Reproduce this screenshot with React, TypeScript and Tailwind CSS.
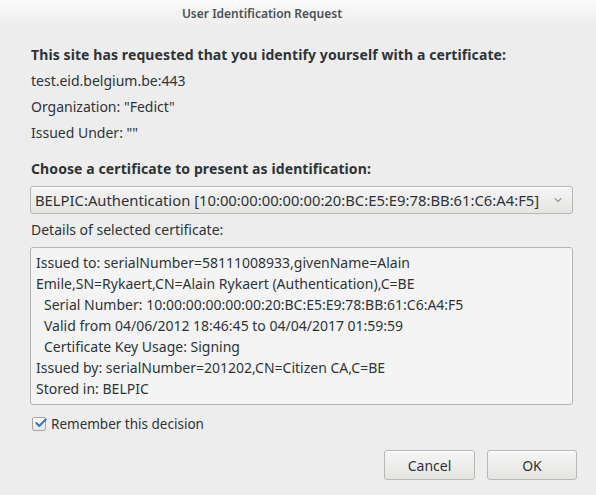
import { ChevronDown, Check } from 'lucide-react';

export default function App() {
  const details = [
    { text: 'Issued to: serialNumber=58111008933,givenName=Alain', indent: false },
    { text: 'Emile,SN=Rykaert,CN=Alain Rykaert (Authentication),C=BE', indent: false },
    { text: 'Serial Number: 10:00:00:00:00:00:20:BC:E5:E9:78:BB:61:C6:A4:F5', indent: true },
    { text: 'Valid from 04/06/2012 18:46:45 to 04/04/2017 01:59:59', indent: true },
    { text: 'Certificate Key Usage: Signing', indent: true },
    { text: 'Issued by: serialNumber=201202,CN=Citizen CA,C=BE', indent: false },
    { text: 'Stored in: BELPIC', indent: false },
  ];

  return (
    <div className="w-[596px] h-[495px] bg-[#ededed] text-[#2e3436] text-[14px] flex flex-col overflow-hidden" style={{ fontFamily: '"Noto Sans", "Open Sans", sans-serif' }}>
      {/* title bar */}
      <div className="h-[28px] shrink-0 bg-gradient-to-b from-[#fafafa] to-[#ededed] flex items-center justify-center pr-[72px]">
        <span className="text-[12px] font-semibold text-[#4a5255]">User Identification Request</span>
      </div>

      <div className="flex flex-col pl-[31px] pr-[23px]">
        <div className="font-bold leading-[26px] mt-[14px] tracking-[0.1px]">This site has requested that you identify yourself with a certificate:</div>
        <div className="leading-[26px]">test.eid.belgium.be:443</div>
        <div className="leading-[26px]">Organization: "Fedict"</div>
        <div className="leading-[26px]">Issued Under: ""</div>

        <div className="font-bold leading-[26px] mt-[10px] tracking-[0.1px]">Choose a certificate to present as identification:</div>
        <div className="mt-[4px] h-[28px] border border-[#b6b6b3] rounded-[3px] bg-gradient-to-b from-[#f6f6f6] to-[#e4e4e2] flex items-center pl-[4px] pr-[8px] -ml-px shadow-[inset_0_1px_0_#ffffff]">
          <span className="flex-1 whitespace-nowrap text-[14.8px]">BELPIC:Authentication [10:00:00:00:00:00:20:BC:E5:E9:78:BB:61:C6:A4:F5]</span>
          <ChevronDown size={12} strokeWidth={2.5} className="text-[#9a9c98]" />
        </div>

        <div className="leading-[26px] mt-[3px]">Details of selected certificate:</div>
        <div className="mt-[4px] h-[158px] border border-[#b6b6b3] rounded-[3px] bg-[#f4f4f4] -ml-px px-[5px] pt-[4px]">
          {details.map((d, i) => (
            <div key={i} className={`leading-[21px] whitespace-nowrap ${d.indent ? 'pl-[8px]' : ''}`}>{d.text}</div>
          ))}
        </div>

        <label className="flex items-center gap-[5px] mt-[11px] ml-[1px]">
          <span className="relative w-[14px] h-[14px] border border-[#a8a8a5] rounded-[2px] bg-gradient-to-b from-[#ffffff] to-[#e6e6e6]">
            <Check size={14} strokeWidth={3.5} className="absolute -top-[2px] left-[1px] text-[#3d74c4]" />
          </span>
          <span className="leading-[16px] text-[13.5px]">Remember this decision</span>
        </label>

        <div className="flex justify-end gap-[12px] mt-[18px] -mr-[4px]">
          <button className="w-[91px] h-[30px] border border-[#b6b6b3] rounded-[3px] bg-gradient-to-b from-[#f6f6f6] to-[#e4e4e2] shadow-[inset_0_1px_0_#ffffff]">Cancel</button>
          <button className="w-[90px] h-[30px] border border-[#b6b6b3] rounded-[3px] bg-gradient-to-b from-[#f6f6f6] to-[#e4e4e2] shadow-[inset_0_1px_0_#ffffff]">OK</button>
        </div>
      </div>
    </div>
  );
}
